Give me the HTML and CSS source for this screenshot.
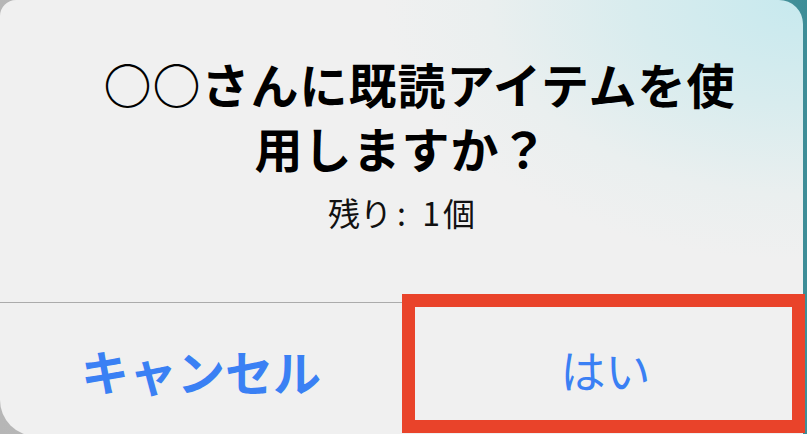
FILE: index.html
```html
<!DOCTYPE html>
<html lang="ja">
<head>
<meta charset="utf-8">
<link rel="stylesheet" href="styles.css">
</head>
<body>
<div class="alert">
  <div class="alert-body">
    <div class="title">○○さんに既読アイテムを使用しますか？</div>
    <div class="message">残り<span class="count">: 1</span>個</div>
  </div>
  <div class="actions">
    <div class="btn btn-cancel">キャンセル</div>
    <div class="btn btn-ok">はい<span class="highlight"></span></div>
  </div>
</div>
</body>
</html>
```
FILE: styles.css
```css
html, body {
  margin: 0;
  padding: 0;
}
body {
  width: 807px;
  height: 434px;
  overflow: hidden;
  background: linear-gradient(to right, #b6b6b6 0%, #c4c4c4 40%, #3d8d97 100%);
  font-family: "Noto Sans CJK JP", "Noto Sans", sans-serif;
}
.alert {
  width: 803px;
  height: 436px;
  border-radius: 16px 24px 0 36px;
  background: radial-gradient(ellipse 420px 260px at 100% 0%, #c7e9ee 0%, #d8ecee 40%, #eaefef 75%, #f0f0f0 100%), #f0f0f0;
  display: flex;
  flex-direction: column;
}
.alert-body {
  height: 303px;
  box-sizing: border-box;
  padding: 51px 60px 0;
  text-align: center;
  border-bottom: 1px solid #ababab;
}
.title {
  font-size: 48px;
  font-weight: 700;
  line-height: 64px;
  letter-spacing: 1px;
  text-indent: 36px;
  color: #000;
}
.message {
  margin-top: 13px;
  font-size: 32px;
  line-height: 40px;
  color: #111;
}
.count {
  letter-spacing: 3px;
  word-spacing: 3px;
  padding: 0 0 0 5px;
}
.actions {
  flex: 1;
  display: grid;
  grid-template-columns: 402px 1fr;
}
.btn {
  display: flex;
  align-items: center;
  justify-content: center;
  font-size: 45px;
  color: #3a80f4;
  position: relative;
}
.btn-cancel {
  font-size: 48px;
  font-weight: 700;
}
.btn-ok {
  font-weight: 400;
  padding-left: 6px;
}
.highlight {
  position: absolute;
  top: -9px;
  left: 0;
  right: -2px;
  bottom: 3px;
  border: 13px solid #e9432a;
}
```
